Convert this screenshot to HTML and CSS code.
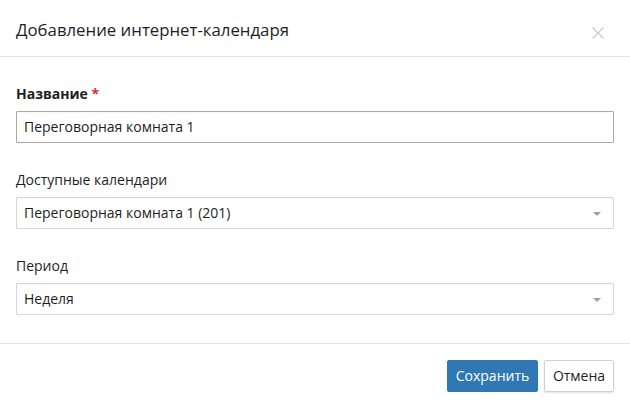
FILE: index.html
```html
<!DOCTYPE html>
<html lang="ru">
<head>
<meta charset="utf-8">
<link rel="stylesheet" href="styles.css">
</head>
<body>
<div class="modal">
  <div class="modal-header">
    <h4 class="modal-title">Добавление интернет-календаря</h4>
    <span class="close" aria-label="Закрыть">
      <svg width="12" height="12" viewBox="0 0 12 12"><path d="M0.5 0.5 L11.5 11.5 M11.5 0.5 L0.5 11.5" stroke="#c8c8c8" stroke-width="1.1" fill="none"/></svg>
    </span>
  </div>
  <div class="modal-body">
    <div class="form-group">
      <label class="label label-bold">Название <span class="req">*</span></label>
      <div class="input input-active">Переговорная комната 1</div>
    </div>
    <div class="form-group">
      <label class="label">Доступные календари</label>
      <div class="input select">Переговорная комната 1 (201)<span class="caret"></span></div>
    </div>
    <div class="form-group">
      <label class="label">Период</label>
      <div class="input select">Неделя<span class="caret"></span></div>
    </div>
  </div>
  <div class="modal-footer">
    <button class="btn btn-primary">Сохранить</button>
    <button class="btn btn-default">Отмена</button>
  </div>
</div>
</body>
</html>
```
FILE: styles.css
```css
* { box-sizing: border-box; }
html, body {
  margin: 0;
  padding: 0;
  background: #fff;
}
body {
  font-family: "Open Sans", "Noto Sans", sans-serif;
  font-size: 14px;
  line-height: 20px;
  color: #1e1e1e;
  width: 630px;
  height: 407px;
  overflow: hidden;
}
.modal {
  width: 630px;
  height: 407px;
  display: flex;
  flex-direction: column;
}
.modal-header {
  height: 58px;
  border-bottom: 1px solid #e5e5e5;
  padding: 0 16px;
  display: flex;
  align-items: center;
  justify-content: space-between;
}
.modal-title {
  margin: 4px 0 0 0;
  font-size: 16.8px;
  font-weight: 400;
  line-height: 24px;
  color: #1e1e1e;
}
.close {
  display: flex;
  width: 12px;
  height: 12px;
  margin: 10px 10px 0 0;
}
.modal-body {
  padding: 27px 16px 28px;
}
.form-group {
  margin-bottom: 27px;
}
.form-group:last-child { margin-bottom: 0; }
.label {
  display: block;
  margin-bottom: 7px;
  line-height: 20px;
}
.label-bold { font-weight: 700; }
.req { color: #d0342c; }
.input {
  height: 32px;
  border: 1px solid #d6d6d6;
  border-radius: 1px;
  padding: 0 7px;
  line-height: 30px;
  position: relative;
  box-shadow: inset 0 1px 1px rgba(0,0,0,0.03);
}
.input-active { border-color: #a9a9a9; }
.caret {
  position: absolute;
  right: 12px;
  top: 14px;
  width: 0;
  height: 0;
  border-left: 4px solid transparent;
  border-right: 4px solid transparent;
  border-top: 4px solid #a0a0a0;
}
.modal-footer {
  border-top: 1px solid #e5e5e5;
  padding: 16px 16px 15px;
  display: flex;
  justify-content: flex-end;
  gap: 6px;
}
.btn {
  font-family: "Open Sans", "Noto Sans", sans-serif;
  font-size: 14px;
  line-height: 20px;
  height: 32px;
  padding: 5px 0;
  text-align: center;
  border-radius: 2px;
  cursor: pointer;
}
.btn-primary {
  width: 91px;
  background: #2f78b4;
  border: 1px solid #2f78b4;
  color: #fff;
}
.btn-default {
  width: 70px;
  background: #fff;
  border: 1px solid #d2d2d2;
  color: #1e1e1e;
  box-shadow: 0 1px 2px rgba(0,0,0,0.12);
}
```
